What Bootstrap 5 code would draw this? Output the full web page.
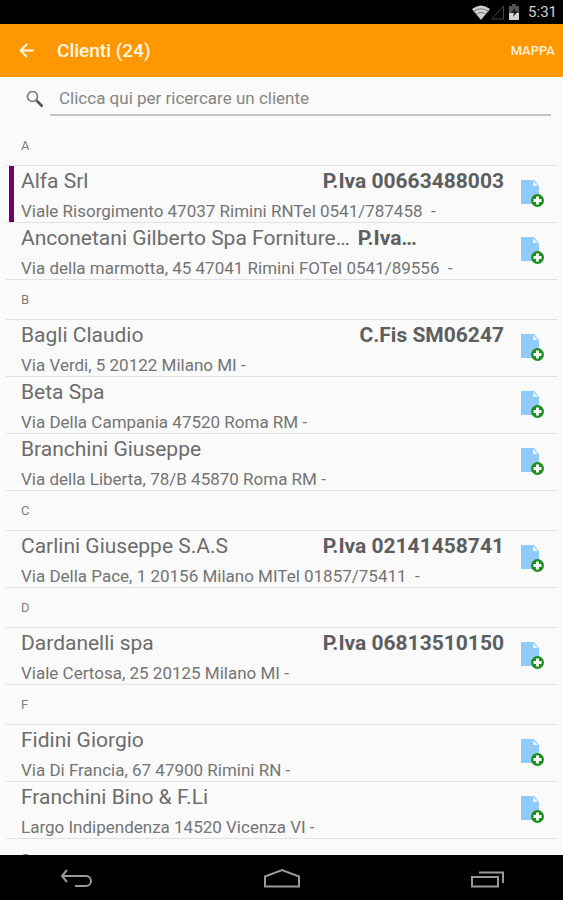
<!DOCTYPE html>
<html lang="it">
<head>
<meta charset="utf-8">
<meta name="viewport" content="width=device-width, initial-scale=1">
<title>Clienti</title>
<link href="https://cdn.jsdelivr.net/npm/bootstrap@5.3.0/dist/css/bootstrap.min.css" rel="stylesheet">
<style>
body{font-family:Roboto,"Liberation Sans",sans-serif;background:#fafafa;color:#6c6c6c}
.status-bar{height:24px;font-size:15px;line-height:24px;color:#d0d0d0;padding-right:6px;gap:1px}
.app-bar{height:53px;background:#ff9800;padding:0 8px 0 17px}
.app-title{font-size:19px;line-height:24px;font-weight:500;color:#fff6e8;margin-left:20px}
.app-bar .btn-action{font-size:13px;line-height:20px;font-weight:500;color:#fff0da}
.search-row{padding:6px 12px 0 26px;gap:6px}
.search-box{height:33px;font-size:17px;color:#6c6c6c;border-bottom:2px solid #c4c4c4!important;padding:0 9px 2px}
.search-box::placeholder{color:#858585;opacity:1}
.client-list{padding:10px 5px 0 6px}
.letter{height:40px;font-size:13px;line-height:40px;padding-left:15px;border-bottom:1px solid #e2e2e2;color:#7d7d7d;font-weight:400}
.client{height:57px;border-bottom:1px solid #e2e2e2;padding-right:14px}
.stripe{width:5px;margin-left:3px;margin-right:7px}
.vip .stripe{background:#6f0070}
.client-name,.client-code{font-size:21px;line-height:30px}
.client-code{font-weight:700;color:#5e5e5e}
.client-addr{font-size:17px;line-height:30px;color:#747474;white-space:pre}
.add-doc{margin-left:16px}
.nav-keys{height:45px;padding:0 58px}
.nav-keys svg,.app-bar svg,.add-doc svg{display:block}
</style>
<script src="https://cdn.jsdelivr.net/npm/bootstrap@5.3.0/dist/js/bootstrap.bundle.min.js"></script>
</head>
<body class="vh-100 d-flex flex-column overflow-hidden">
<svg class="d-none" aria-hidden="true">
<symbol id="doc-add" viewBox="0 0 24 28">
<path d="M1 0h13l5 6v18H1z" fill="#90caf9"/><path d="M13 1v5h5z" fill="#e8f4fe"/>
<circle cx="17.500" cy="20.500" r="6.500" fill="#1c901c"/><path d="M17.500 16.500v8M13.500 20.500h8" stroke="#fff" stroke-width="3"/>
</symbol>
</svg>
<div class="status-bar bg-black d-flex justify-content-end align-items-center flex-shrink-0">
<svg width="18" height="15" viewBox="0 0 18 15" aria-hidden="true"><path d="M0 4Q9-3 18 4L9 15z" fill="#d0d0d0"/><path d="M1.500 6.500Q9 1 16.500 6.500M4 9.500Q9 5.500 14 9.500" fill="none" stroke="#777" stroke-width="1"/></svg>
<svg width="13" height="15" viewBox="0 0 13 15" aria-hidden="true"><path d="M12.500 1v13H1z" fill="none" stroke="#444"/></svg>
<svg class="ms-1 me-2" width="10" height="16" viewBox="0 0 10 16" aria-hidden="true"><path d="M3 0h4v2h3v14H0V2h3z" fill="#555"/><path d="M0 9h10v7H0z" fill="#d0d0d0"/><path d="M6 4L2 9h3l-1 4 5-6H6z" fill="#1a1a1a"/></svg>
<span>5:31</span>
</div>
<header class="app-bar d-flex align-items-center flex-shrink-0">
<button type="button" class="btn p-0 border-0" aria-label="Indietro"><svg width="20" height="18" viewBox="0 0 20 18" fill="none" stroke="#fff6e8" stroke-width="2"><path d="M17 8.500H4M10 2L3.500 8.500 10 15"/></svg></button>
<h1 class="app-title mb-0 me-auto">Clienti (24)</h1>
<button type="button" class="btn btn-action p-0 border-0">MAPPA</button>
</header>
<form class="search-row d-flex align-items-center flex-shrink-0">
<label for="search"><svg class="d-block" width="18" height="18" viewBox="0 0 18 18" fill="none"><circle cx="6.500" cy="5.500" r="5" stroke="#777" stroke-width="1.600"/><path d="M10.500 9.500L16.500 15.500" stroke="#555" stroke-width="2.600"/></svg></label>
<input id="search" type="text" class="search-box flex-grow-1 border-0 bg-transparent" placeholder="Clicca qui per ricercare un cliente" aria-label="Cerca cliente">
</form>
<main class="client-list flex-grow-1 overflow-hidden">
<h2 class="letter mb-0">A</h2>
<div class="client vip d-flex"><span class="stripe"></span><div class="flex-grow-1"><div class="d-flex justify-content-between"><span class="client-name">Alfa Srl</span><span class="client-code">P.Iva 00663488003</span></div><div class="client-addr">Viale Risorgimento 47037 Rimini RNTel 0541/787458  -</div></div><button type="button" class="add-doc btn p-0 border-0" aria-label="Aggiungi documento"><svg width="24" height="28"><use href="#doc-add"/></svg></button></div>
<div class="client d-flex"><span class="stripe"></span><div class="flex-grow-1"><div class="d-flex gap-2"><span class="client-name">Anconetani Gilberto Spa Forniture…</span><span class="client-code">P.Iva…</span></div><div class="client-addr">Via della marmotta, 45 47041 Rimini FOTel 0541/89556  -</div></div><button type="button" class="add-doc btn p-0 border-0" aria-label="Aggiungi documento"><svg width="24" height="28"><use href="#doc-add"/></svg></button></div>
<h2 class="letter mb-0">B</h2>
<div class="client d-flex"><span class="stripe"></span><div class="flex-grow-1"><div class="d-flex justify-content-between"><span class="client-name">Bagli Claudio</span><span class="client-code">C.Fis SM06247</span></div><div class="client-addr">Via Verdi, 5 20122 Milano MI -</div></div><button type="button" class="add-doc btn p-0 border-0" aria-label="Aggiungi documento"><svg width="24" height="28"><use href="#doc-add"/></svg></button></div>
<div class="client d-flex"><span class="stripe"></span><div class="flex-grow-1"><div class="d-flex"><span class="client-name">Beta Spa</span></div><div class="client-addr">Via Della Campania 47520 Roma RM -</div></div><button type="button" class="add-doc btn p-0 border-0" aria-label="Aggiungi documento"><svg width="24" height="28"><use href="#doc-add"/></svg></button></div>
<div class="client d-flex"><span class="stripe"></span><div class="flex-grow-1"><div class="d-flex"><span class="client-name">Branchini Giuseppe</span></div><div class="client-addr">Via della Liberta, 78/B 45870 Roma RM -</div></div><button type="button" class="add-doc btn p-0 border-0" aria-label="Aggiungi documento"><svg width="24" height="28"><use href="#doc-add"/></svg></button></div>
<h2 class="letter mb-0">C</h2>
<div class="client d-flex"><span class="stripe"></span><div class="flex-grow-1"><div class="d-flex justify-content-between"><span class="client-name">Carlini Giuseppe S.A.S</span><span class="client-code">P.Iva 02141458741</span></div><div class="client-addr">Via Della Pace, 1 20156 Milano MITel 01857/75411  -</div></div><button type="button" class="add-doc btn p-0 border-0" aria-label="Aggiungi documento"><svg width="24" height="28"><use href="#doc-add"/></svg></button></div>
<h2 class="letter mb-0">D</h2>
<div class="client d-flex"><span class="stripe"></span><div class="flex-grow-1"><div class="d-flex justify-content-between"><span class="client-name">Dardanelli spa</span><span class="client-code">P.Iva 06813510150</span></div><div class="client-addr">Viale Certosa, 25 20125 Milano MI -</div></div><button type="button" class="add-doc btn p-0 border-0" aria-label="Aggiungi documento"><svg width="24" height="28"><use href="#doc-add"/></svg></button></div>
<h2 class="letter mb-0">F</h2>
<div class="client d-flex"><span class="stripe"></span><div class="flex-grow-1"><div class="d-flex"><span class="client-name">Fidini Giorgio</span></div><div class="client-addr">Via Di Francia, 67 47900 Rimini RN -</div></div><button type="button" class="add-doc btn p-0 border-0" aria-label="Aggiungi documento"><svg width="24" height="28"><use href="#doc-add"/></svg></button></div>
<div class="client d-flex"><span class="stripe"></span><div class="flex-grow-1"><div class="d-flex"><span class="client-name">Franchini Bino &amp; F.Li</span></div><div class="client-addr">Largo Indipendenza 14520 Vicenza VI -</div></div><button type="button" class="add-doc btn p-0 border-0" aria-label="Aggiungi documento"><svg width="24" height="28"><use href="#doc-add"/></svg></button></div>
<h2 class="letter mb-0">G</h2>
</main>
<nav class="nav-keys bg-black d-flex justify-content-between align-items-center flex-shrink-0" aria-label="Sistema">
<button type="button" class="btn p-0 border-0" aria-label="Indietro"><svg width="36" height="20" viewBox="0 0 36 20" fill="none" stroke="#999" stroke-width="2"><path d="M4 8h24a5 5 0 0 1 0 10H17M9 2L4 8l5 6"/></svg></button>
<button type="button" class="btn p-0 border-0" aria-label="Home"><svg width="36" height="20" viewBox="0 0 36 20" fill="none" stroke="#999" stroke-width="2"><path d="M1 18.500V8.500L18 2l17 6.500v10z"/></svg></button>
<button type="button" class="btn p-0 border-0" aria-label="Recenti"><svg width="36" height="20" viewBox="0 0 36 20" fill="none" stroke="#999" stroke-width="2"><path d="M3 9h26v9.500H3zM10 4.500h24v10.500"/></svg></button>
</nav>
</body>
</html>
